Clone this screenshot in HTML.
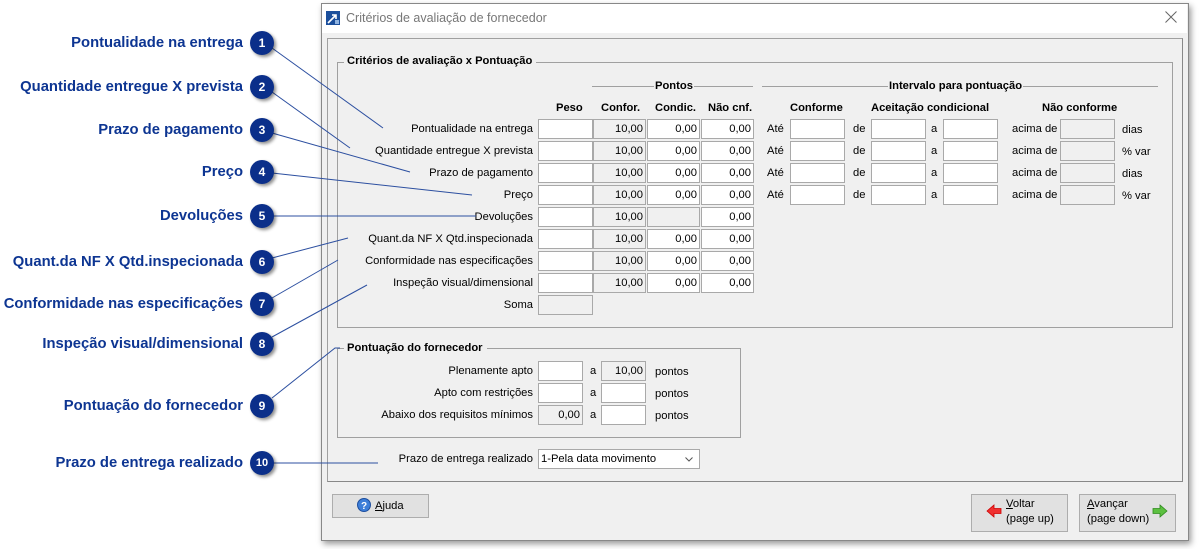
<!DOCTYPE html>
<html><head><meta charset="utf-8"><style>
body{margin:0;width:1200px;height:549px;background:#fff;position:relative;overflow:hidden;font-family:"Liberation Sans",sans-serif;font-size:11.2px;color:#000}
.a{position:absolute}
.in{position:absolute;height:18px;border:1px solid #a9a9a9;background:#fff;box-sizing:content-box;text-align:right;line-height:18px;padding-right:2px}
.g{background:#f0f0f0}
.lb{position:absolute;text-align:right;white-space:nowrap;line-height:20px}
.t{position:absolute;white-space:nowrap;line-height:20px}
.b{font-weight:bold}
.co{position:absolute;font-weight:bold;font-size:14.8px;color:#0d3592;text-align:right;white-space:nowrap;right:957px;line-height:20px}
.ci{position:absolute;width:24px;height:24px;border-radius:50%;background:#0b2f8a;color:#fff;font-weight:bold;font-size:12px;text-align:center;line-height:24px;box-shadow:2px 2px 3px rgba(0,0,0,.45)}
.btn{position:absolute;background:#e1e1e1;border:1px solid #adadad;box-sizing:border-box}
</style></head><body>
<div class="a" style="left:321px;top:3px;width:866px;height:536px;background:#f0f0f0;border:1px solid #888;box-shadow:2px 3px 6px rgba(0,0,0,.4)"></div>
<div class="a" style="left:322px;top:4px;width:865px;height:29px;background:#fff"></div>
<svg class="a" style="left:326px;top:11px" width="14" height="14"><rect width="14" height="14" fill="#1b4f9c"/><path d="M2 12 L10 4 M6 4 H10 V8" stroke="#fff" stroke-width="1.6" fill="none"/><rect x="9" y="9" width="4" height="4" fill="#8fb3e0"/></svg>
<div class="t" style="left:346px;top:8px;color:#777;font-size:12.5px">Critérios de avaliação de fornecedor</div>
<svg class="a" style="left:1165px;top:11px" width="12" height="12"><path d="M0.5 0.5 L11.5 11.5 M11.5 0.5 L0.5 11.5" stroke="#666" stroke-width="1"/></svg>
<div class="a" style="left:327px;top:38px;width:854px;height:442px;border:1px solid #a0a0a0;border-right-color:#888;border-bottom-color:#888"></div>
<div class="a" style="left:337px;top:62px;width:834px;height:264px;border:1px solid #a0a0a0"></div>
<div class="t b" style="left:344px;top:51px;background:#f0f0f0;padding:0 4px 0 3px">Critérios de avaliação x Pontuação</div>
<div class="a" style="left:592px;top:86px;width:161px;border-top:1px solid #a0a0a0"></div>
<div class="t b" style="left:654px;top:76px;background:#f0f0f0;padding:0 1px">Pontos</div>
<div class="a" style="left:762px;top:86px;width:396px;border-top:1px solid #a0a0a0"></div>
<div class="t b" style="left:888px;top:76px;background:#f0f0f0;padding:0 1px">Intervalo para pontuação</div>
<div class="t b" style="left:556px;top:98px">Peso</div>
<div class="t b" style="left:601px;top:98px">Confor.</div>
<div class="t b" style="left:655px;top:98px">Condic.</div>
<div class="t b" style="left:708px;top:98px">Não cnf.</div>
<div class="t b" style="left:790px;top:98px">Conforme</div>
<div class="t b" style="left:871px;top:98px">Aceitação condicional</div>
<div class="t b" style="left:1042px;top:98px">Não conforme</div>

<div class="lb" style="right:667px;top:119px">Pontualidade na entrega</div>
<div class="lb" style="right:667px;top:141px">Quantidade entregue X prevista</div>
<div class="lb" style="right:667px;top:163px">Prazo de pagamento</div>
<div class="lb" style="right:667px;top:185px">Preço</div>
<div class="lb" style="right:667px;top:207px">Devoluções</div>
<div class="lb" style="right:667px;top:229px">Quant.da NF X Qtd.inspecionada</div>
<div class="lb" style="right:667px;top:251px">Conformidade nas especificações</div>
<div class="lb" style="right:667px;top:273px">Inspeção visual/dimensional</div>
<div class="lb" style="right:667px;top:295px">Soma</div>

<div class="in" style="left:538px;top:119px;width:51px"></div><div class="in g" style="left:593px;top:119px;width:49px">10,00</div><div class="in" style="left:647px;top:119px;width:49px">0,00</div><div class="in" style="left:701px;top:119px;width:49px">0,00</div>
<div class="in" style="left:538px;top:141px;width:51px"></div><div class="in g" style="left:593px;top:141px;width:49px">10,00</div><div class="in" style="left:647px;top:141px;width:49px">0,00</div><div class="in" style="left:701px;top:141px;width:49px">0,00</div>
<div class="in" style="left:538px;top:163px;width:51px"></div><div class="in g" style="left:593px;top:163px;width:49px">10,00</div><div class="in" style="left:647px;top:163px;width:49px">0,00</div><div class="in" style="left:701px;top:163px;width:49px">0,00</div>
<div class="in" style="left:538px;top:185px;width:51px"></div><div class="in g" style="left:593px;top:185px;width:49px">10,00</div><div class="in" style="left:647px;top:185px;width:49px">0,00</div><div class="in" style="left:701px;top:185px;width:49px">0,00</div>
<div class="in" style="left:538px;top:207px;width:51px"></div><div class="in g" style="left:593px;top:207px;width:49px">10,00</div><div class="in g" style="left:647px;top:207px;width:49px"></div><div class="in" style="left:701px;top:207px;width:49px">0,00</div>
<div class="in" style="left:538px;top:229px;width:51px"></div><div class="in g" style="left:593px;top:229px;width:49px">10,00</div><div class="in" style="left:647px;top:229px;width:49px">0,00</div><div class="in" style="left:701px;top:229px;width:49px">0,00</div>
<div class="in" style="left:538px;top:251px;width:51px"></div><div class="in g" style="left:593px;top:251px;width:49px">10,00</div><div class="in" style="left:647px;top:251px;width:49px">0,00</div><div class="in" style="left:701px;top:251px;width:49px">0,00</div>
<div class="in" style="left:538px;top:273px;width:51px"></div><div class="in g" style="left:593px;top:273px;width:49px">10,00</div><div class="in" style="left:647px;top:273px;width:49px">0,00</div><div class="in" style="left:701px;top:273px;width:49px">0,00</div>
<div class="in g" style="left:538px;top:295px;width:51px"></div>

<div class="t" style="left:767px;top:119px">Até</div><div class="in" style="left:790px;top:119px;width:51px"></div><div class="t" style="left:853px;top:119px">de</div><div class="in" style="left:871px;top:119px;width:51px"></div><div class="t" style="left:931px;top:119px">a</div><div class="in" style="left:943px;top:119px;width:51px"></div><div class="t" style="left:1012px;top:119px">acima de</div><div class="in g" style="left:1060px;top:119px;width:51px"></div><div class="t" style="left:1122px;top:120px">dias</div>
<div class="t" style="left:767px;top:141px">Até</div><div class="in" style="left:790px;top:141px;width:51px"></div><div class="t" style="left:853px;top:141px">de</div><div class="in" style="left:871px;top:141px;width:51px"></div><div class="t" style="left:931px;top:141px">a</div><div class="in" style="left:943px;top:141px;width:51px"></div><div class="t" style="left:1012px;top:141px">acima de</div><div class="in g" style="left:1060px;top:141px;width:51px"></div><div class="t" style="left:1122px;top:142px">% var</div>
<div class="t" style="left:767px;top:163px">Até</div><div class="in" style="left:790px;top:163px;width:51px"></div><div class="t" style="left:853px;top:163px">de</div><div class="in" style="left:871px;top:163px;width:51px"></div><div class="t" style="left:931px;top:163px">a</div><div class="in" style="left:943px;top:163px;width:51px"></div><div class="t" style="left:1012px;top:163px">acima de</div><div class="in g" style="left:1060px;top:163px;width:51px"></div><div class="t" style="left:1122px;top:164px">dias</div>
<div class="t" style="left:767px;top:185px">Até</div><div class="in" style="left:790px;top:185px;width:51px"></div><div class="t" style="left:853px;top:185px">de</div><div class="in" style="left:871px;top:185px;width:51px"></div><div class="t" style="left:931px;top:185px">a</div><div class="in" style="left:943px;top:185px;width:51px"></div><div class="t" style="left:1012px;top:185px">acima de</div><div class="in g" style="left:1060px;top:185px;width:51px"></div><div class="t" style="left:1122px;top:186px">% var</div>

<div class="a" style="left:337px;top:348px;width:402px;height:88px;border:1px solid #a0a0a0"></div>
<div class="t b" style="left:344px;top:338px;background:#f0f0f0;padding:0 4px 0 3px">Pontuação do fornecedor</div>
<div class="lb" style="right:667px;top:361px">Plenamente apto</div>
<div class="lb" style="right:667px;top:383px">Apto com restrições</div>
<div class="lb" style="right:667px;top:405px">Abaixo dos requisitos mínimos</div>
<div class="in" style="left:538px;top:361px;width:41px"></div><div class="t" style="left:590px;top:361px">a</div><div class="in g" style="left:601px;top:361px;width:41px">10,00</div><div class="t" style="left:655px;top:362px">pontos</div>
<div class="in" style="left:538px;top:383px;width:41px"></div><div class="t" style="left:590px;top:383px">a</div><div class="in" style="left:601px;top:383px;width:41px"></div><div class="t" style="left:655px;top:384px">pontos</div>
<div class="in g" style="left:538px;top:405px;width:41px">0,00</div><div class="t" style="left:590px;top:405px">a</div><div class="in" style="left:601px;top:405px;width:41px"></div><div class="t" style="left:655px;top:406px">pontos</div>

<div class="lb" style="right:667px;top:449px">Prazo de entrega realizado</div>
<div class="in" style="left:538px;top:449px;width:158px;text-align:left;padding:0 0 0 2px">1-Pela data movimento</div>
<svg class="a" style="left:685px;top:457px" width="8" height="5"><path d="M0.5 0.5 L4 4 L7.5 0.5" stroke="#555" fill="none"/></svg>

<div class="btn" style="left:332px;top:494px;width:97px;height:24px"></div>
<svg class="a" style="left:357px;top:498px" width="14" height="14"><circle cx="7" cy="7" r="6.5" fill="#3d7ed8" stroke="#1d4e9e"/><text x="7" y="11" font-size="10" font-weight="bold" fill="#fff" text-anchor="middle" font-family="Liberation Sans">?</text></svg>
<div class="t" style="left:375px;top:496px"><u>A</u>juda</div>
<div class="btn" style="left:971px;top:494px;width:97px;height:38px"></div>
<svg class="a" style="left:986px;top:504px" width="16" height="14"><path d="M1 7 L8 1 V4.5 H15 V9.5 H8 V13 Z" fill="#f03030" stroke="#c00" stroke-width="0.8"/></svg>
<div class="t" style="left:1006px;top:497px;line-height:15px"><u>V</u>oltar<br>(page up)</div>
<div class="btn" style="left:1079px;top:494px;width:97px;height:38px"></div>
<div class="t" style="left:1087px;top:497px;line-height:15px"><u>A</u>vançar<br>(page down)</div>
<svg class="a" style="left:1152px;top:504px" width="16" height="14"><path d="M15 7 L8 1 V4.5 H1 V9.5 H8 V13 Z" fill="#5cc040" stroke="#2e8a1e" stroke-width="0.8"/></svg>

<svg class="a" style="left:0;top:0" width="1200" height="549">
<g stroke="#2c4fa0" stroke-width="1" fill="none">
<path d="M272 48 L383 128"/><path d="M272 92 L350 148"/><path d="M272 133 L410 172"/><path d="M272 173 L472 195"/>
<path d="M272 216 L476 216"/><path d="M272 258 L348 238"/><path d="M272 298 L338 260"/><path d="M272 337 L367 285"/>
<path d="M272 398 L335 348 L340 348"/><path d="M272 463 L378 463"/>
</g></svg>
<div class="co" style="top:33px">Pontualidade na entrega</div><div class="ci" style="left:250px;top:31px">1</div>
<div class="co" style="top:77px">Quantidade entregue X prevista</div><div class="ci" style="left:250px;top:75px">2</div>
<div class="co" style="top:120px">Prazo de pagamento</div><div class="ci" style="left:250px;top:118px">3</div>
<div class="co" style="top:162px">Preço</div><div class="ci" style="left:250px;top:160px">4</div>
<div class="co" style="top:206px">Devoluções</div><div class="ci" style="left:250px;top:204px">5</div>
<div class="co" style="top:252px">Quant.da NF X Qtd.inspecionada</div><div class="ci" style="left:250px;top:250px">6</div>
<div class="co" style="top:294px">Conformidade nas especificações</div><div class="ci" style="left:250px;top:292px">7</div>
<div class="co" style="top:334px">Inspeção visual/dimensional</div><div class="ci" style="left:250px;top:332px">8</div>
<div class="co" style="top:396px">Pontuação do fornecedor</div><div class="ci" style="left:250px;top:394px">9</div>
<div class="co" style="top:453px">Prazo de entrega realizado</div><div class="ci" style="left:250px;top:451px;font-size:11px">10</div>
</body></html>
